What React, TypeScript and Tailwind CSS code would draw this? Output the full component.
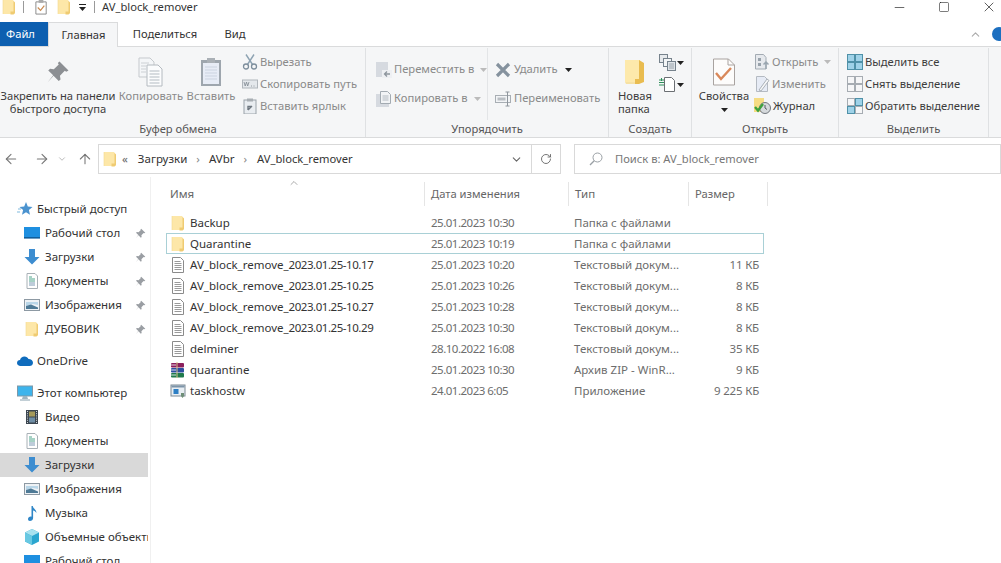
import React from "react";
import { ArrowLeft, ArrowRight, ArrowUp, ChevronDown, ChevronUp, Minus, RotateCw, Square, X } from "lucide-react";

type P = { s?: number };
const Svg = ({ s = 16, children, vb = "0 0 16 16" }: { s?: number; children: React.ReactNode; vb?: string }) => (
  <svg width={s} height={s} viewBox={vb} className="shrink-0" fill="none">{children}</svg>
);

const Folder = ({ s = 16 }: P) => (
  <Svg s={s}>
    <path d="M2 1h10l1.500 2v12H2z" fill="#fde7a8" />
    <path d="M12.500 2l1.500 1.500V14l-1.500 1.500H9.500V12.500h3z" fill="#efcb72" />
    <path d="M2 1v14" stroke="#f3d98e" strokeWidth=".6" />
  </Svg>
);
const Txt = () => (
  <Svg>
    <path d="M2.500.5h8l3 3v12h-11z" fill="#fff" stroke="#8b8b8b" />
    <path d="M4.500 4.500h6M4.500 6.500h7M4.500 8.500h7M4.500 10.500h7M4.500 12.500h7" stroke="#9a9a9a" />
  </Svg>
);
const Rar = () => (
  <Svg>
    <rect x="1" y="1" width="13" height="4.500" rx="1" fill="#8b1f5c" />
    <rect x="1" y="6" width="13" height="4.500" rx="1" fill="#2d4fa0" />
    <rect x="1" y="11" width="13" height="4.500" rx="1" fill="#1f7a4c" />
    <path d="M1 3h5M1 8h5M1 13h5" stroke="#fff" strokeWidth=".8" />
    <path d="M7 0v16" stroke="#d9c58a" strokeWidth="1" />
  </Svg>
);
const Exe = () => (
  <Svg>
    <rect x="1" y="2" width="14" height="11" fill="#e8eef3" stroke="#7d8a94" />
    <path d="M1.500 2.500h13v2h-13z" fill="#7d94a8" />
    <rect x="3.500" y="6" width="5" height="5" fill="#2d7fc4" />
    <path d="M11 10h3v3l-1.500 2L11 13z" fill="#6f8f78" />
  </Svg>
);
const Star = () => (
  <Svg>
    <path d="M9 1l1.800 4.400L15.500 6l-3.600 3 1.100 4.800L9 11.200 5 13.800 6.100 9 2.500 6l4.700-.6z" fill="#4b93cf" />
    <path d="M1 8h3M0 11h3" stroke="#7fb9dd" />
  </Svg>
);
const Pin = ({ s = 11 }: P) => (
  <Svg s={s}>
    <path d="M9 1l6 6-1.500.8-1-.6-3.200 3.300.4 2.500-1.200 1L5 10.500 1 15l3.800-4.800L1.500 7l1.200-1.200 2.500.4 3.300-3.200-.6-1z" fill="#9a9ea3" />
  </Svg>
);
const Desktop = () => (
  <Svg>
    <rect x="0" y="2" width="16" height="11" fill="#1e8fe0" />
    <rect x="0" y="12" width="16" height="1.600" fill="#0f5e9c" />
  </Svg>
);
const Down = () => (
  <Svg>
    <path d="M5 0h6v8h4.500L8 15.500.500 8H5z" fill="#3d8dd0" />
  </Svg>
);
const Docs = () => (
  <Svg>
    <path d="M3 .5h8l2.500 2.500v12.500H3z" fill="#fff" stroke="#a8b0b6" />
    <path d="M5 4h3M5 6h6M5 8h6" stroke="#4fa58c" />
    <path d="M5 10h6M5 12h6" stroke="#7c9ab5" />
  </Svg>
);
const Pics = () => (
  <Svg>
    <rect x=".5" y="2.500" width="15" height="11" fill="#eef2f5" stroke="#8d99a3" />
    <path d="M2 5h12v3L9 7 2 9z" fill="#b9d6e8" />
    <path d="M2 9l5-1.500 7 3V12H2z" fill="#4e7a96" />
  </Svg>
);
const Cloud = () => (
  <Svg>
    <path d="M3.500 13C1.500 13 0 11.600 0 10c0-1.700 1.300-3 3-3 .5-2 2.200-3.500 4.500-3.500 1.800 0 3.300 1 4 2.500 2.500 0 4.500 1.500 4.500 3.700 0 2-1.500 3.300-3.500 3.300z" fill="#0f6cbd" />
  </Svg>
);
const Pc = () => (
  <Svg>
    <rect x=".5" y="1" width="15" height="10" fill="#3db4ec" stroke="#7d98a8" />
    <path d="M5 14h6l-1-3H6z" fill="#9db4c0" />
    <path d="M3 15h10" stroke="#86a0ae" />
  </Svg>
);
const Film = () => (
  <Svg>
    <rect x="2" y="1" width="12" height="14" fill="#3c4650" />
    <rect x="5" y="2.500" width="6" height="5" fill="#a59a5a" />
    <rect x="5" y="8.500" width="6" height="5" fill="#6f8ea6" />
    <path d="M3.500 2v12M12.500 2v12" stroke="#cfd4d8" strokeDasharray="1 1.200" />
  </Svg>
);
const Note = () => (
  <Svg>
    <path d="M7.500 1h1.300c.4 3 4 3.500 3.500 7-.7-1.500-2-2.300-3.200-2.500V13c0 1.700-1.500 3-3.200 3C4.600 16 4 15 4 14c0-1.500 1.700-2.700 3.500-2.300z" fill="#2f86c7" />
  </Svg>
);
const Cube = () => (
  <Svg>
    <path d="M8 0l7 3.500v9L8 16l-7-3.500v-9z" fill="#2aa6cf" />
    <path d="M8 0l7 3.500L8 7 1 3.500z" fill="#a8e2ef" />
    <path d="M1 3.500L8 7v9l-7-3.500z" fill="#68c8e2" />
  </Svg>
);

const PinLarge = () => (
  <Svg s={24}>
    <path d="M9 1l6 6-1.500.8-1-.6-3.200 3.300.4 2.500-1.200 1L5 10.500 1 15l3.800-4.800L1.500 7l1.200-1.200 2.500.4 3.300-3.200-.6-1z" fill="#8c8f93" />
  </Svg>
);
const CopyLarge = () => (
  <svg width="26" height="30" viewBox="0 0 26 30" className="shrink-0" fill="none">
    <path d="M1 1h11l4 4v15H1z" fill="#f4f6f8" stroke="#c5c9cd" />
    <path d="M9 8h11l4 4v17H9z" fill="#fbfcfd" stroke="#b4bac0" />
    <path d="M11.500 14h10M11.500 17h10M11.500 20h10M11.500 23h10M11.500 26h10" stroke="#b3bbc2" />
    <path d="M3 6h8M3 9h5M3 12h5M3 15h5" stroke="#ccd0d4" />
  </svg>
);
const PasteLarge = () => (
  <svg width="22" height="30" viewBox="0 0 22 30" className="shrink-0" fill="none">
    <rect x="1" y="3" width="20" height="26" fill="#9ea6ae" />
    <rect x="3" y="6" width="16" height="21" fill="#e7ecf6" />
    <rect x="7" y="1" width="8" height="5" fill="#aab0b6" />
    <path d="M5 10h12M5 13h12M5 16h12M5 19h12M5 22h12" stroke="#cbd3e0" />
  </svg>
);
const Scissors = () => (
  <Svg>
    <path d="M4 .5l6.500 10M12 .5L5.500 10.500" stroke="#8ea3b3" strokeWidth="1.400" />
    <circle cx="4" cy="12.500" r="2.500" stroke="#7d8e9c" strokeWidth="1.300" />
    <circle cx="12" cy="12.500" r="2.500" stroke="#7d8e9c" strokeWidth="1.300" />
  </Svg>
);
const CopyPath = () => (
  <Svg>
    <rect x=".5" y="4" width="15" height="8" fill="#e4e8ec" stroke="#b0b6bc" />
    <path d="M2 6l1.200 4L4.500 6l1.200 4L7 6M9 10h1M11.500 10h1" stroke="#7f8890" strokeWidth=".8" />
  </Svg>
);
const Shortcut = () => (
  <Svg>
    <rect x="2" y="2" width="12" height="14" fill="#e9edf1" stroke="#9aa2a9" />
    <rect x="5" y="0.500" width="6" height="3" fill="#a8aeb3" />
    <path d="M6 12V8.500h3.500M6 12l4-4" stroke="#6e7780" strokeWidth="1.400" />
  </Svg>
);
const MoveTo = () => (
  <Svg>
    <rect x="0" y="0" width="12" height="15" fill="#d6dae0" />
    <rect x="6" y="8" width="10" height="8" fill="#eef0f3" />
    <path d="M14 12H8.500m2.500-2.500L8.500 12l2.500 2.500" stroke="#8d959d" strokeWidth="1.300" />
  </Svg>
);
const CopyTo = () => (
  <Svg>
    <rect x="0" y="3" width="13" height="13" fill="#d6dae0" />
    <path d="M4.500.5h7l3 3v9h-10z" fill="#f2f4f6" stroke="#a3abb2" />
    <path d="M6.500 5h6M6.500 7h6M6.500 9h6" stroke="#b3bac1" />
  </Svg>
);
const Del = () => (
  <Svg>
    <path d="M2 2l12 12M14 2L2 14" stroke="#85929e" strokeWidth="3.200" />
  </Svg>
);
const Rename = () => (
  <svg width="17" height="16" viewBox="0 0 17 16" className="shrink-0" fill="none">
    <rect x=".5" y="4.500" width="15" height="7" fill="#f2f4f6" stroke="#a8aeb4" />
    <rect x="2.500" y="6.500" width="8" height="3" fill="#b9bec3" />
    <path d="M12.500 1v14M10.500 1h4M10.500 15h4" stroke="#8f969d" />
  </svg>
);
const NewFolder = () => (
  <svg width="22" height="26" viewBox="0 0 22 26" className="shrink-0" fill="none">
    <path d="M1 1h15v22H1z" fill="#fde9ab" />
    <path d="M15 1l5 3v19l-5 2h-4v-5h4z" fill="#e9bc50" />
    <path d="M1 23h10v2H2z" fill="#f6e1a4" />
  </svg>
);
const NewItem = () => (
  <svg width="17" height="17" viewBox="0 0 17 17" className="shrink-0" fill="none">
    <rect x=".5" y=".5" width="8" height="8" fill="#e6e9ec" stroke="#76828c" />
    <rect x="4.500" y="4.500" width="8" height="8" fill="#f3f5f6" stroke="#76828c" />
    <rect x="8.500" y="7.500" width="8" height="9" fill="#dfe4e8" stroke="#76828c" />
    <path d="M10 10h5M10 12h5M10 14h5" stroke="#8b959e" strokeWidth=".8" />
  </svg>
);
const EasyAccess = () => (
  <svg width="17" height="17" viewBox="0 0 17 17" className="shrink-0" fill="none">
    <path d="M5.500 1.500h7l3 3v11h-10z" fill="#fff" stroke="#6b6f73" />
    <path d="M0 4h5M0 6.500h5M0 9h5M2.500 2v3" stroke="#2f8f5a" />
  </svg>
);
const Props = () => (
  <svg width="24" height="28" viewBox="0 0 24 28" className="shrink-0" fill="none">
    <path d="M1.500 1h15l6 6v20h-21z" fill="#fdfcfb" stroke="#a9a3a0" />
    <path d="M16 1v6h6.500" stroke="#a9a3a0" />
    <path d="M4 15l5 6 10-11" stroke="#d9885a" strokeWidth="2.400" />
  </svg>
);
const OpenI = () => (
  <Svg>
    <path d="M1.500.5h8l2.500 3V15h-10.500z" fill="#e6e9ed" stroke="#a3abb3" />
    <path d="M4 4h3v3H4zM4 9h3v3H4z" fill="#98a2ab" />
    <path d="M12 8v7M9.500 10.500L12 8l2.500 2.500" stroke="#9aa6b0" strokeWidth="1.500" />
  </Svg>
);
const EditI = () => (
  <Svg>
    <path d="M2.500.5h8l3 3v12h-11z" fill="#e6ebf5" stroke="#b4bac2" />
    <path d="M5 14L13 3l2 1.500L7 15z" fill="#f6f7f8" stroke="#aab1b8" />
  </Svg>
);
const History = () => (
  <svg width="17" height="16" viewBox="0 0 17 16" className="shrink-0" fill="none">
    <rect x="0" y="0" width="10" height="14" fill="#f5dc83" />
    <circle cx="11" cy="10" r="5.500" fill="#d5d9dc" stroke="#72787e" />
    <path d="M11 7v3l2 1.500" stroke="#555b61" />
    <path d="M1 9l3 3.500L9 6" stroke="#3da13d" strokeWidth="2.400" />
  </svg>
);
const Grid4 = ({ v }: { v: 0 | 1 | 2 }) => {
  const blue = "#9fd2e8";
  const cells: [number, number, boolean][] = [
    [0.5, 0.5, v === 0],
    [8.5, 0.5, v === 0 || v === 2],
    [0.5, 8.5, v === 0 || v === 2],
    [8.5, 8.5, v === 0],
  ];
  return (
    <Svg>
      {cells.map(([x, y, on], i) => (
        <rect key={i} x={x} y={y} width="7" height="7" fill={on ? blue : "none"} stroke={on ? "#4f91a8" : "#a6acb2"} />
      ))}
    </Svg>
  );
};
const Caret = ({ c = "#333" }: { c?: string }) => (
  <svg width="7" height="4" viewBox="0 0 7 4" className="shrink-0"><path d="M0 0h7L3.500 4z" fill={c} /></svg>
);

const Large = ({ icon, lines, w, dark, align = "text-center" }: { icon: React.ReactNode; lines: string[]; w: string; dark?: boolean; align?: string }) => (
  <div className={`flex flex-col items-center ${w} ${dark ? "text-[#3c3c3c]" : "text-[#8a8a8a]"}`}>
    <div className="flex h-[34px] w-full shrink-0 items-center justify-center">{icon}</div>
    <div className={`w-full whitespace-nowrap leading-[13px] ${align}`}>
      {lines.map((l) => (<div key={l}>{l}</div>))}
    </div>
  </div>
);
const Small = ({ icon, text, dark, caret, gap = "gap-[2px]", h = "h-[22px]" }: { icon: React.ReactNode; text: string; dark?: boolean; caret?: string; gap?: string; h?: string }) => (
  <div className={`flex ${h} items-center whitespace-nowrap ${gap} ${dark ? "text-[#3c3c3c]" : "text-[#8a8a8a]"}`}>
    {icon}
    <span>{text}</span>
    {caret && <span className="ml-[4px]"><Caret c={caret} /></span>}
  </div>
);
const Group = ({ w, label, children, labelCls = "" }: { w: string; label: string; children: React.ReactNode; labelCls?: string }) => (
  <div className={`flex h-full shrink-0 flex-col border-r border-[#dfe1e3] ${w}`}>
    <div className="flex h-[72px] shrink-0">{children}</div>
    <div className={`text-center leading-[17px] text-[#555] ${labelCls}`}>{label}</div>
  </div>
);

const NavRow = ({ icon, text, top, pin, sel }: { icon: React.ReactNode; text: string; top?: boolean; pin?: boolean; sel?: boolean }) => (
  <div className={`flex h-[24px] shrink-0 items-center overflow-hidden whitespace-nowrap ${top ? "gap-[4px] pl-[17px]" : "gap-[5px] pl-[24px]"} ${sel ? "bg-[#d9d9d9]" : ""}`}>
    {icon}
    <span className={pin ? "w-[85px]" : ""}>{text}</span>
    {pin && <Pin />}
  </div>
);

const Name = ({ n }: { n: string }) => {
  const m = n.match(/^(AV_block_remove_)(.+)$/);
  if (!m) return <span className="whitespace-nowrap text-[#333]">{n}</span>;
  return (
    <span className="whitespace-nowrap text-[#333]">
      {m[1]}
      <span className="tracking-[-0.45px]">{m[2]}</span>
    </span>
  );
};

const rows: [React.ReactNode, string, string, string, string][] = [
  [<Folder />, "Backup", "25.01.2023 10:30", "Папка с файлами", ""],
  [<Folder />, "Quarantine", "25.01.2023 10:19", "Папка с файлами", ""],
  [<Txt />, "AV_block_remove_2023.01.25-10.17", "25.01.2023 10:20", "Текстовый докум...", "11 КБ"],
  [<Txt />, "AV_block_remove_2023.01.25-10.25", "25.01.2023 10:26", "Текстовый докум...", "8 КБ"],
  [<Txt />, "AV_block_remove_2023.01.25-10.27", "25.01.2023 10:28", "Текстовый докум...", "8 КБ"],
  [<Txt />, "AV_block_remove_2023.01.25-10.29", "25.01.2023 10:30", "Текстовый докум...", "8 КБ"],
  [<Txt />, "delminer", "28.10.2022 16:08", "Текстовый докум...", "35 КБ"],
  [<Rar />, "quarantine", "25.01.2023 10:30", "Архив ZIP - WinR...", "9 КБ"],
  [<Exe />, "taskhostw", "24.01.2023 6:05", "Приложение", "9 225 КБ"],
];

export default function App() {
  return (
    <div className="flex h-[563px] w-[1001px] flex-col overflow-hidden bg-white text-[11.5px] text-[#333] [font-family:'Noto_Sans',sans-serif]">
      {/* title */}
      <div className="flex h-[22px] shrink-0 items-start overflow-hidden">
        <div className="ml-[1px] flex h-[14px] items-center">
          <Folder />
          <div className="ml-[6px] h-[12px] w-px bg-[#9a9a9a]" />
          <div className="ml-[10px]"><Svg s={15}><path d="M2 2h11v13H2z" fill="#fff" stroke="#888" /><path d="M4 8l3 3 4-5" stroke="#c98a50" strokeWidth="1.300" /><rect x="5" y="0" width="5" height="3" fill="#aaa" /></Svg></div>
          <div className="ml-[7px]"><Folder /></div>
          <div className="ml-[7px] flex flex-col items-center gap-[2px]"><div className="h-[1px] w-[7px] bg-[#222]" /><Caret c="#222" /></div>
          <div className="ml-[8px] h-[12px] w-px bg-[#9a9a9a]" />
          <span className="ml-[7px] text-[11.2px] leading-[14px] text-[#333]">AV_block_remover</span>
        </div>
        <div className="ml-auto flex h-[14px] items-center gap-[31px] pr-[4px] text-[#111]">
          <Minus size={15} strokeWidth={1} />
          <Square size={12} strokeWidth={1.100} />
          <X size={16} strokeWidth={1} />
        </div>
      </div>
      {/* tabs */}
      <div className="flex h-[24px] shrink-0 items-stretch text-[11.2px]">
        <div className="flex w-[48px] items-center justify-center bg-[#0d5fb0] pr-[7px] text-white">Файл</div>
        <div className="z-10 -mb-px flex w-[70px] items-center justify-center border-x border-t border-[#dadbdc] bg-[#f5f6f7] pl-[1px]">Главная</div>
        <div className="flex w-[94px] items-center justify-center">Поделиться</div>
        <div className="flex w-[46px] items-center justify-center">Вид</div>
        <div className="ml-auto flex items-center gap-[10px] pr-0">
          <ChevronUp size={13} className="text-[#aaa]" />
          <div className="-mr-[5px] h-[14px] w-[14px] rounded-full bg-[#1c6fc0]" />
        </div>
      </div>
      {/* ribbon */}
      <div className="flex h-[92px] shrink-0 border-y border-[#dadbdc] bg-[#f5f6f7] pt-[1px] text-[11.2px]">
        <Group w="w-[366px]" label="Буфер обмена" labelCls="pr-[9px]">
          <div className="flex pt-[7px]">
            <Large icon={<PinLarge />} lines={["Закрепить на панели", "быстрого доступа"]} w="w-[116px]" dark />
            <Large icon={<CopyLarge />} lines={["Копировать"]} w="w-[70px]" />
            <Large icon={<PasteLarge />} lines={["Вставить"]} w="w-[50px]" />
          </div>
          <div className="ml-[6px] flex flex-col pt-[3px]">
            <Small icon={<Scissors />} text="Вырезать" />
            <Small icon={<CopyPath />} text="Скопировать путь" />
            <Small icon={<Shortcut />} text="Вставить ярлык" />
          </div>
        </Group>
        <Group w="w-[243px]" label="Упорядочить">
          <div className="flex w-[122px] flex-col border-r border-[#e3e5e7] pl-[10px] pt-[7px]">
            <Small icon={<MoveTo />} text="Переместить в" caret="#bbb" h="h-[29px]" />
            <Small icon={<CopyTo />} text="Копировать в" caret="#bbb" h="h-[29px]" />
          </div>
          <div className="flex flex-col pl-[7px] pt-[7px]">
            <Small icon={<Del />} text="Удалить" caret="#222" h="h-[29px]" gap="gap-[3px]" />
            <Small icon={<Rename />} text="Переименовать" h="h-[29px]" />
          </div>
        </Group>
        <Group w="w-[83px]" label="Создать">
          <div className="flex w-[50px] pl-[9px] pt-[7px]">
            <Large icon={<NewFolder />} lines={["Новая", "папка"]} w="w-[34px]" dark align="text-left" />
          </div>
          <div className="flex flex-col gap-[5px] pt-[6px]">
            <div className="flex items-center gap-[1px]"><NewItem /><Caret c="#222" /></div>
            <div className="flex items-center gap-[1px]"><EasyAccess /><Caret c="#222" /></div>
          </div>
        </Group>
        <Group w="w-[147px]" label="Открыть">
          <div className="flex w-[62px] pl-[7px] pt-[7px]">
            <div className="flex w-[50px] flex-col items-center text-[#3c3c3c]">
              <div className="flex h-[34px] items-center"><Props /></div>
              <div className="leading-[13px]">Свойства</div>
              <div className="mt-[6px]"><Caret c="#222" /></div>
            </div>
          </div>
          <div className="flex flex-col pt-[3px]">
            <Small icon={<OpenI />} text="Открыть" caret="#bbb" />
            <Small icon={<EditI />} text="Изменить" />
            <Small icon={<History />} text="Журнал" dark gap="gap-[2px]" />
          </div>
        </Group>
        <Group w="w-[150px]" label="Выделить">
          <div className="flex flex-col pl-[8px] pt-[3px]">
            <Small icon={<Grid4 v={0} />} text="Выделить все" dark />
            <Small icon={<Grid4 v={1} />} text="Снять выделение" dark />
            <Small icon={<Grid4 v={2} />} text="Обратить выделение" dark />
          </div>
        </Group>
      </div>
      {/* address */}
      <div className="flex h-[39px] shrink-0 items-start pt-[6px]">
        <div className="flex h-[30px] w-[98px] shrink-0 items-center pl-[3px] text-[#777]">
          <ArrowLeft size={16} strokeWidth={1.600} />
          <ArrowRight size={16} strokeWidth={1.600} className="ml-[15px]" />
          <ChevronDown size={10} strokeWidth={1.600} className="ml-[7px] text-[#999]" />
          <ArrowUp size={16} strokeWidth={1.600} className="ml-[10px]" />
        </div>
        <div className="flex h-[30px] w-[463px] shrink-0 items-center border border-[#d9d9d9] pl-[3px]">
          <Folder />
          <span className="ml-[4px] text-[#666]">«</span>
          <span className="ml-[10px]">Загрузки</span>
          <span className="ml-[9px] text-[#888]">›</span>
          <span className="ml-[9px]">AVbr</span>
          <span className="ml-[9px] text-[#888]">›</span>
          <span className="ml-[10px] text-[11.2px]">AV_block_remover</span>
          <div className="ml-auto flex h-full items-center">
            <ChevronDown size={13} strokeWidth={2} className="mr-[8px] text-[#666]" />
            <div className="flex h-full w-[29px] items-center justify-center border-l border-[#d9d9d9] text-[#666]"><RotateCw size={12} strokeWidth={1.800} /></div>
          </div>
        </div>
        <div className="ml-[13px] flex h-[30px] flex-1 items-center border border-[#d9d9d9] pl-[14px] text-[#777]">
          <svg width="14" height="14" viewBox="0 0 14 14" fill="none" className="shrink-0"><circle cx="8.500" cy="5.500" r="4.500" stroke="#9aa0a5" /><path d="M5.200 8.800L1 13" stroke="#9aa0a5" strokeWidth="1.300" /></svg>
          <span className="ml-[12px] text-[11.2px]">Поиск в: AV_block_remover</span>
        </div>
      </div>
      {/* body */}
      <div className="flex min-h-0 flex-1">
        <div className="flex w-[151px] shrink-0 flex-col overflow-hidden border-r border-[#f0f0f0] pr-[2px] pt-[20px]">
          <NavRow icon={<Star />} text="Быстрый доступ" top />
          <NavRow icon={<Desktop />} text="Рабочий стол" pin />
          <NavRow icon={<Down />} text="Загрузки" pin />
          <NavRow icon={<Docs />} text="Документы" pin />
          <NavRow icon={<Pics />} text="Изображения" pin />
          <NavRow icon={<Folder />} text="ДУБОВИК" pin />
          <div className="h-[8px] shrink-0" />
          <NavRow icon={<Cloud />} text="OneDrive" top />
          <div className="h-[8px] shrink-0" />
          <NavRow icon={<Pc />} text="Этот компьютер" top />
          <NavRow icon={<Film />} text="Видео" />
          <NavRow icon={<Docs />} text="Документы" />
          <NavRow icon={<Down />} text="Загрузки" sel />
          <NavRow icon={<Pics />} text="Изображения" />
          <NavRow icon={<Note />} text="Музыка" />
          <NavRow icon={<Cube />} text="Объемные объекты" />
          <NavRow icon={<Desktop />} text="Рабочий стол" />
        </div>
        <div className="min-w-0 flex-1 pl-[15px]">
          <div className="relative flex h-[35px] items-start pt-[5px] text-[#666]">
            <div className="flex h-[24px] w-[258px] items-center pl-[4px]">Имя</div>
            <div className="flex h-[24px] w-[144px] items-center border-l border-[#e5e5e5] pl-[6px] text-[11.2px]">Дата изменения</div>
            <div className="flex h-[24px] w-[120px] items-center border-l border-[#e5e5e5] pl-[6px]">Тип</div>
            <div className="flex h-[24px] w-[80px] items-center border-x border-[#e5e5e5] pl-[6px] text-[11.2px]">Размер</div>
            <ChevronUp size={12} strokeWidth={1.400} className="absolute left-[122px] top-0 text-[#888]" />
          </div>
          {rows.map(([ic, n, d, t, sz], i) => (
            <div key={n + i} className={`flex h-[21px] w-[598px] items-center border ${i === 1 ? "border-[#a9d0d6]" : "border-transparent"}`}>
              <div className="flex w-[264px] shrink-0 items-center gap-[4px] pl-[3px]">{ic}<Name n={n} /></div>
              <div className="w-[143px] shrink-0 whitespace-nowrap tracking-[-0.5px] text-[#6d6d6d]">{d}</div>
              <div className="w-[115px] shrink-0 whitespace-nowrap text-[#6d6d6d]">{t}</div>
              <div className="w-[70px] shrink-0 whitespace-nowrap text-right tracking-[-0.2px] text-[#6d6d6d]">{sz}</div>
            </div>
          ))}
        </div>
      </div>
    </div>
  );
}
